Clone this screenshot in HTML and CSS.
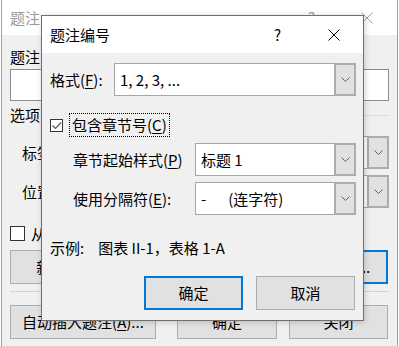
FILE: index.html
```html
<!DOCTYPE html>
<html lang="zh-CN">
<head>
    <meta charset="UTF-8">
    <title>题注编号</title>
    <link rel="stylesheet" href="styles.css">
</head>
<body>
    <div class="window">
        <div class="titlebar">
            <span class="title">题注</span>
            <span class="help">?</span>
            <svg class="close" width="12" height="12" viewBox="0 0 12 12"><path d="M0.5 0.5L11.5 11.5M11.5 0.5L0.5 11.5" stroke="#a0a0a0" stroke-width="1" fill="none"/></svg>
        </div>
        <div class="win-body">
            <div class="label">题注(<u>C</u>):</div>
            <div class="input"></div>
            <div class="group"><span>选项</span><span class="rule"></span></div>
            <div class="field">
                <span class="field-label">标签(<u>L</u>):</span>
                <div class="combo"><span class="combo-text"></span><span class="drop"><svg width="9" height="5" viewBox="0 0 9 5"><polyline points="0.5,0.5 4.5,4.5 8.5,0.5" stroke="#606060" fill="none"/></svg></span></div>
            </div>
            <div class="field second">
                <span class="field-label">位置(<u>P</u>):</span>
                <div class="combo"><span class="combo-text"></span><span class="drop"><svg width="9" height="5" viewBox="0 0 9 5"><polyline points="0.5,0.5 4.5,4.5 8.5,0.5" stroke="#606060" fill="none"/></svg></span></div>
            </div>
            <div class="exclude"><span class="box"></span><span>从题注中排除标签(<u>E</u>)</span></div>
            <div class="btn-row">
                <button class="btn wide">新建标签(<u>N</u>)...</button>
                <button class="btn mid">删除标签(<u>D</u>)</button>
                <button class="btn last focused">编号(<u>U</u>)...</button>
            </div>
            <div class="separator"></div>
            <div class="btn-row bottom">
                <button class="btn wide">自动插入题注(<u>A</u>)...</button>
                <button class="btn mid">确定</button>
                <button class="btn last">关闭</button>
            </div>
        </div>
    </div>

    <div class="dialog">
        <div class="dlg-title">
            <span class="title">题注编号</span>
            <span class="dlg-help">?</span>
            <svg class="dlg-close" width="12" height="12" viewBox="0 0 12 12"><path d="M0.5 0.5L11.5 11.5M11.5 0.5L0.5 11.5" stroke="#000" stroke-width="1" fill="none"/></svg>
        </div>
        <div class="dlg-body">
            <div class="row">
                <span class="row-label">格式(<u>F</u>):</span>
                <div class="combo"><span class="combo-text">1, 2, 3, ...</span><span class="drop"><svg width="9" height="5" viewBox="0 0 9 5"><polyline points="0.5,0.5 4.5,4.5 8.5,0.5" stroke="#606060" fill="none"/></svg></span></div>
            </div>
            <div class="check-row">
                <span class="checkbox"><svg width="11" height="11" viewBox="0 0 11 11"><polyline points="1.5,5.5 4.5,8.5 10,2.5" stroke="#555" stroke-width="1.2" fill="none"/></svg></span>
                <span class="focus">包含章节号(<u>C</u>)</span>
            </div>
            <div class="row sub">
                <span class="sub-label">章节起始样式(<u>P</u>)</span>
                <div class="combo"><span class="combo-text">标题 1</span><span class="drop"><svg width="9" height="5" viewBox="0 0 9 5"><polyline points="0.5,0.5 4.5,4.5 8.5,0.5" stroke="#606060" fill="none"/></svg></span></div>
            </div>
            <div class="row sub">
                <span class="sub-label">使用分隔符(<u>E</u>):</span>
                <div class="combo"><span class="combo-text">-<span class="sep-name">(连字符)</span></span><span class="drop"><svg width="9" height="5" viewBox="0 0 9 5"><polyline points="0.5,0.5 4.5,4.5 8.5,0.5" stroke="#606060" fill="none"/></svg></span></div>
            </div>
            <div class="example">示例:<span class="example-text">图表 II-1，表格 1-A</span></div>
            <div class="dlg-buttons">
                <button class="btn focused">确定</button>
                <button class="btn">取消</button>
            </div>
        </div>
    </div>
</body>
</html>
```

FILE: styles.css
```css
body { margin: 0; background: #ffffff; font-family: "Noto Sans CJK SC", "Noto Sans", sans-serif; font-size: 15px; color: #000; overflow: hidden; }
u { text-underline-offset: 2px; text-decoration-thickness: 1px; }

/* background window: 题注 */
.window { margin-left: 1px; width: 397px; height: 346px; box-sizing: border-box; border-left: 1px solid #a0a0a0; border-right: 1px solid #a0a0a0; background: #f0f0f0; }
.titlebar { height: 35px; background: #fff; display: flex; align-items: center; padding-left: 8px; color: #999; line-height: 20px; }
.titlebar .title { flex: 1; }
.help { width: 8px; margin-right: 45px; }
.close { margin-right: 24px; }
.win-body { padding: 12px 8px 0; line-height: 20px; }
.input { height: 32px; margin-top: 2px; box-sizing: border-box; background: #fff; border: 1px solid #8c8c8c; }
.group { display: flex; align-items: center; margin-top: 4px; }
.rule { flex: 1; height: 1px; background: #dcdcdc; margin-left: 8px; }
.field { display: flex; align-items: center; margin-top: 11px; padding-left: 12px; }
.field.second { margin-top: 6px; }
.field-label { width: 70px; }

.combo { flex: 1; height: 33px; box-sizing: border-box; display: flex; align-items: center; background: #fff; border: 1px solid #a6a6a6; }
.combo-text { flex: 1; padding-left: 5px; white-space: nowrap; }
.drop { width: 22px; align-self: stretch; margin: -1px -1px -1px 0; box-sizing: border-box; border: 2px solid #adadad; background: #e1e1e1; display: flex; align-items: center; justify-content: center; }

.exclude { display: flex; align-items: center; height: 15px; margin-top: 18px; line-height: 15px; }
.box { width: 15px; height: 15px; box-sizing: border-box; border: 1px solid #333; background: #fff; margin-right: 6px; }
.btn-row { display: flex; margin-top: 9px; }
.btn-row.bottom { margin-top: 13px; }
.separator { height: 1px; background: #d5d5d5; margin-top: 7px; }
.btn { height: 34px; box-sizing: border-box; border: 1px solid #adadad; background: #e1e1e1; font: inherit; color: #000; padding: 0; white-space: nowrap; }
.btn.wide { width: 146px; }
.btn.mid { width: 100px; margin-left: 21px; }
.btn.last { width: 99px; margin-left: 12px; }
.btn.focused { border: 2px solid #0078d7; }

/* dialog: 题注编号 */
.dialog { position: absolute; left: 41px; top: 15px; width: 323px; height: 306px; box-sizing: border-box; border: 1px solid #6f6f6f; background: #f0f0f0; box-shadow: 1px 1px 6px rgba(0,0,0,0.18); line-height: 20px; }
.dlg-title { height: 37px; background: #fff; display: flex; align-items: center; padding-left: 8px; }
.dlg-title .title { flex: 1; }
.dlg-help { width: 8px; margin-right: 46px; }
.dlg-close { margin-right: 23px; }
.dlg-body { padding: 10px 7px 0 8px; }
.row { display: flex; align-items: center; }
.row-label { width: 64px; }
.row.sub { margin-top: 6px; padding-left: 23px; }
.sub-label { width: 122px; }
.check-row { display: flex; align-items: center; height: 24px; margin-top: 17px; }
.checkbox { width: 13px; height: 13px; box-sizing: border-box; border: 1px solid #333; background: #fff; display: flex; align-items: center; justify-content: center; margin-right: 6px; }
.focus { border: 1px dotted #000; padding: 1px 2px; line-height: 20px; }
.sep-name { margin-left: 22px; }
.example { margin-top: 23px; }
.example-text { margin-left: 14px; }
.dlg-buttons { display: flex; justify-content: flex-end; gap: 13px; margin-top: 18px; padding-right: 1px; }
.dlg-buttons .btn { width: 99px; }
```
